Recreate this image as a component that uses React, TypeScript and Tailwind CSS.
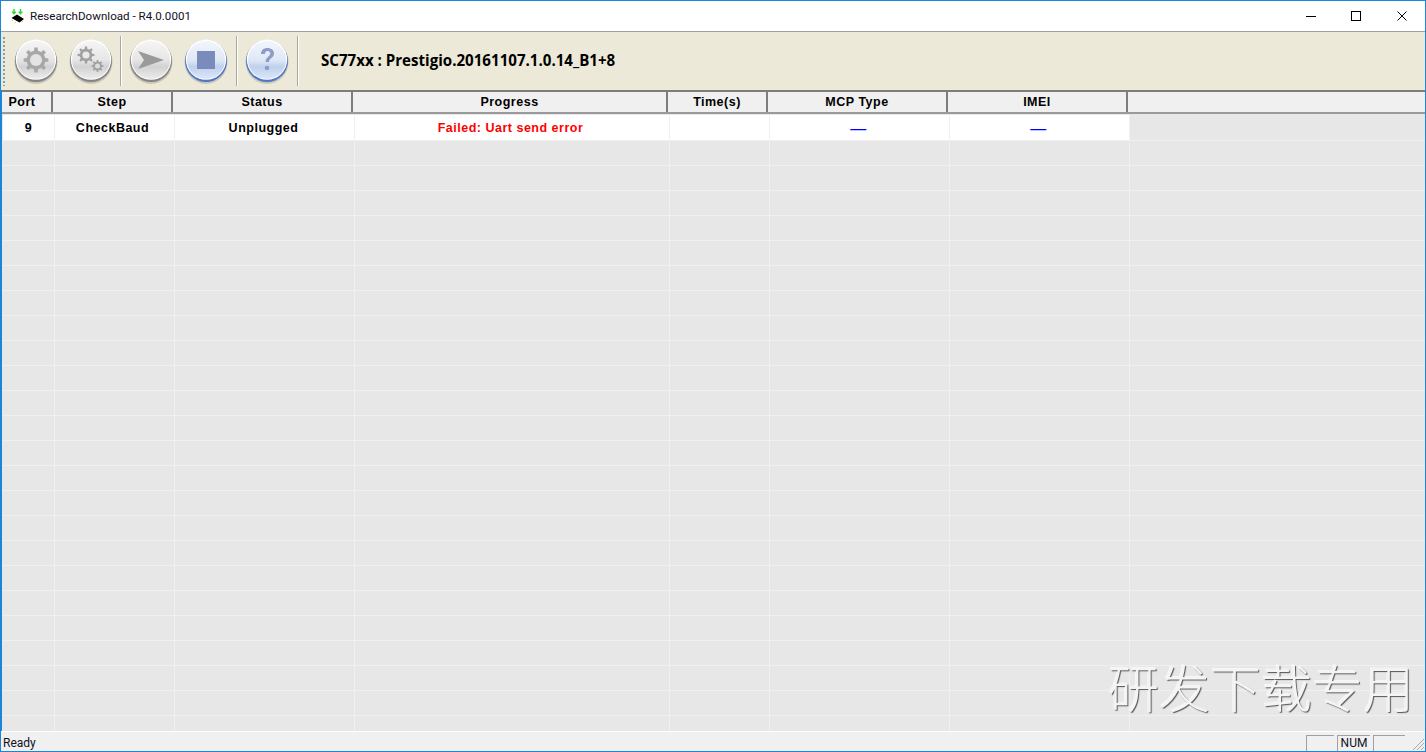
import React from 'react';

const columns = [
  { label: 'Port', width: 'w-[50px]', cell: 'w-[52px]', text: '9', headerClass: 'pr-[10px]', cellClass: 'text-black' },
  { label: 'Step', width: 'w-[120px]', cell: 'w-[120px]', text: 'CheckBaud', headerClass: '', cellClass: 'text-black pr-[4px]' },
  { label: 'Status', width: 'w-[180px]', cell: 'w-[180px]', text: 'Unplugged', headerClass: '', cellClass: 'text-black pr-[2px]' },
  { label: 'Progress', width: 'w-[315px]', cell: 'w-[315px]', text: 'Failed: Uart send error', headerClass: '', cellClass: 'text-[#ff0000] pr-[3px]' },
  { label: 'Time(s)', width: 'w-[100px]', cell: 'w-[100px]', text: '', headerClass: '', cellClass: '' },
  { label: 'MCP Type', width: 'w-[180px]', cell: 'w-[180px]', text: '—', headerClass: '', cellClass: 'text-[#0000ff] font-normal text-[16px] pr-[2px]' },
  { label: 'IMEI', width: 'w-[180px]', cell: 'w-[180px]', text: '—', headerClass: '', cellClass: 'text-[#0000ff] font-normal text-[16px] pr-[2px]' },
];

const emptyRows = Array.from({ length: 24 }, (_, i) => i);

// toothed wheel outline, used by the two settings buttons
function gearPath(cx: number, cy: number, outer: number, inner: number, teeth: number) {
  const pts: string[] = [];
  const step = (Math.PI * 2) / teeth;
  for (let i = 0; i < teeth; i++) {
    const a = i * step;
    [
      [a - step * 0.27, inner],
      [a - step * 0.16, outer],
      [a + step * 0.16, outer],
      [a + step * 0.27, inner],
    ].forEach(([t, r]) => {
      pts.push(`${(cx + Math.cos(t) * r).toFixed(2)} ${(cy + Math.sin(t) * r).toFixed(2)}`);
    });
  }
  return `M${pts.join('L')}Z`;
}

function GlossButton({ id, blue, children }: { id: string; blue?: boolean; children: React.ReactNode }) {
  const top = blue ? '#f2f6fc' : '#f5f5f5';
  const mid = blue ? '#dfe8f6' : '#e6e6e6';
  const low = blue ? '#c0d0ec' : '#d2d2d2';
  const bottom = blue ? '#dbe7fa' : '#ececec';
  const rim = blue ? '#4f78c2' : '#858585';
  return (
    <svg width="46" height="48" viewBox="0 0 46 48" className="block shrink-0">
      <defs>
        <linearGradient id={id} x1="0" y1="0" x2="0" y2="1">
          <stop offset="0" stopColor={top} />
          <stop offset="0.5" stopColor={mid} />
          <stop offset="0.68" stopColor={low} />
          <stop offset="1" stopColor={bottom} />
        </linearGradient>
      </defs>
      <ellipse cx="23" cy="25" rx="21.5" ry="22" fill="#8d8a80" opacity="0.35" />
      <circle cx="23" cy="24" r="21" fill={rim} />
      <circle cx="23" cy="22.6" r="20.2" fill="#ffffff" />
      <circle cx="23" cy="23" r="19" fill={`url(#${id})`} />
      {children}
    </svg>
  );
}

function Separator({ ml, mr }: { ml: string; mr: string }) {
  return <div className={`h-[50px] w-[2px] shrink-0 border-r border-white bg-[#a9a79e] ${ml} ${mr}`} />;
}

export default function App() {
  return (
    <div className="relative flex h-[752px] w-[1426px] flex-col overflow-hidden border border-[#1b86d8] bg-white font-['Open_Sans','Noto_Sans',sans-serif]">
      {/* title bar */}
      <div className="flex h-[30px] shrink-0 items-center bg-white">
        <svg width="16" height="16" viewBox="0 0 16 16" className="ml-[9px] shrink-0">
          <path d="M4 1v4M2.200 3.600 4 5.600l1.800-2M10.500 1v4M8.700 3.600l1.800 2 1.800-2" stroke="#22dd22" strokeWidth="1.400" fill="none" />
          <path d="M1.500 10 7 6.500l7 4.500-4.500 3.500z" fill="#000" />
          <path d="M2 12l1 1M5 14l1 1M12 13l1 1" stroke="#e8d800" strokeWidth="1" />
        </svg>
        <span className="ml-[4px] mt-[1px] font-['Roboto',sans-serif] text-[11.6px] leading-none text-[#111122]">ResearchDownload - R4.0.0001</span>
        <div className="ml-auto flex items-center">
          <svg width="12" height="12" viewBox="0 0 12 12" className="mr-[33px]"><path d="M1 6.500h10" stroke="#000" /></svg>
          <svg width="12" height="12" viewBox="0 0 12 12" className="mr-[34px]"><rect x="1.500" y="1.500" width="9" height="9" fill="none" stroke="#000" /></svg>
          <svg width="12" height="12" viewBox="0 0 12 12" className="mr-[17px]"><path d="M1.500 1.500l9 9M10.500 1.500l-9 9" stroke="#000" /></svg>
        </div>
      </div>

      {/* toolbar */}
      <div className="flex h-[59px] shrink-0 items-center border-t border-[#a0a0a0] bg-[#ece9d8]">
        <div className="ml-[2px] h-[50px] w-[2px] shrink-0 bg-[radial-gradient(circle,#8d9aa8_1px,transparent_1px)] bg-[length:2px_4px]" />
        <div className="ml-[8px] flex items-center gap-[9px]">
          <GlossButton id="b1">
            <path d={gearPath(23, 23, 12.500, 9.500, 8)} fill="#a8a8a8" />
            <circle cx="23" cy="23" r="6" fill="#e4e4e4" />
          </GlossButton>
          <GlossButton id="b2">
            <path d={gearPath(18, 18, 8.500, 6.300, 8)} fill="#a0a0a0" />
            <circle cx="18" cy="18" r="3.600" fill="#e9e9e9" />
            <path d={gearPath(29.500, 29, 6, 4.400, 8)} fill="#a0a0a0" />
            <circle cx="29.500" cy="29" r="2.500" fill="#dcdcdc" />
          </GlossButton>
        </div>
        <Separator ml="ml-[6px]" mr="mr-[6px]" />
        <div className="flex items-center gap-[9px]">
          <GlossButton id="b3">
            <path d="M10 14 36 23 10 32 16 23z" fill="#9a9a9a" />
          </GlossButton>
          <GlossButton id="b4" blue>
            <rect x="14" y="14" width="18" height="18" fill="#7a8cbb" />
          </GlossButton>
        </div>
        <Separator ml="ml-[7px]" mr="mr-[6px]" />
        <GlossButton id="b5" blue>
          <path d="M17 17c0-4 3-6 6.500-6 3.800 0 6.500 2.300 6.500 5.500 0 3-2 4-3.500 5.300-1 .9-1.500 1.700-1.500 3.200h-3.400c0-2.600.8-3.700 2.400-5.100 1.300-1.100 2.300-1.900 2.300-3.300 0-1.500-1-2.500-2.600-2.500-1.700 0-2.700 1.100-2.800 2.900z" fill="#8c9cc6" />
          <circle cx="23" cy="31" r="2.300" fill="#8c9cc6" />
        </GlossButton>
        <Separator ml="ml-[7px]" mr="mr-[22px]" />
        <span className="text-[15.1px] font-bold leading-none text-black">SC77xx : Prestigio.20161107.1.0.14_B1+8</span>
      </div>

      {/* list */}
      <div className="flex min-h-0 flex-1 flex-col border-l border-[#1b86d8] bg-[#e7e7e7]">
        <div className="flex h-[24px] shrink-0 border-y-2 border-[#7d7d7d] border-b-[#9a9a9a] bg-[#f0f0f0] pl-[1px]">
          {columns.map((c) => (
            <div
              key={c.label}
              className={`flex items-center justify-center border-r-2 border-[#7d7d7d] font-['Liberation_Sans',sans-serif] text-[12.5px] font-bold leading-none tracking-[0.5px] text-black ${c.width} ${c.headerClass}`}
            >
              {c.label}
            </div>
          ))}
          <div className="flex-1" />
        </div>
        <div className="flex h-[27px] shrink-0 border-b border-[#efefef] pl-[1px] pt-[1px]">
          {columns.map((c) => (
            <div
              key={c.label}
              className={`flex items-center justify-center border-r border-[#f0f0f0] bg-white pt-[2px] font-['Liberation_Sans',sans-serif] text-[12.5px] font-bold leading-none tracking-[0.5px] ${c.cell} ${c.cellClass}`}
            >
              {c.text}
            </div>
          ))}
          <div className="flex-1" />
        </div>
        {emptyRows.map((r) => (
          <div key={r} className="flex h-[25px] shrink-0 border-b border-[#f0f0f0] pl-[1px]">
            {columns.map((c) => (
              <div key={c.label} className={`border-r border-[#f0f0f0] ${c.cell}`} />
            ))}
          </div>
        ))}
      </div>

      {/* watermark */}
      <div className="absolute left-[1107px] top-[660px] whitespace-nowrap font-['Noto_Sans_CJK_SC',sans-serif] text-[51px] font-light leading-none text-[#f4f4f4] [text-shadow:1px_1px_1px_#555,-1px_-1px_0_#f6f6f6]">
        研发下载专用
      </div>

      {/* status bar */}
      <div className="relative flex h-[20px] shrink-0 items-center border-t border-white bg-[#f0f0f0]">
        <span className="ml-[2px] mt-[2px] font-['Roboto',sans-serif] text-[12px] leading-none text-[#111122]">Ready</span>
        <div className="ml-auto mr-[20px] mt-[3px] flex h-[16px] items-center gap-[3px]">
          <div className="h-full w-[28px] border-l border-t border-[#a0a0a0]" />
          <div className="flex h-full w-[33px] items-center justify-center border-l border-t border-[#a0a0a0] pb-[1px] font-['Roboto',sans-serif] text-[12px] leading-none text-[#111122]">NUM</div>
          <div className="h-full w-[32px] border-l border-t border-[#a0a0a0]" />
        </div>
        <svg width="14" height="14" viewBox="0 0 14 14" className="absolute bottom-0 right-0">
          <path d="M13 2 2 13M13 6l-7 7M13 10l-3 3" stroke="#a8a8a8" strokeWidth="1" />
        </svg>
      </div>
    </div>
  );
}
